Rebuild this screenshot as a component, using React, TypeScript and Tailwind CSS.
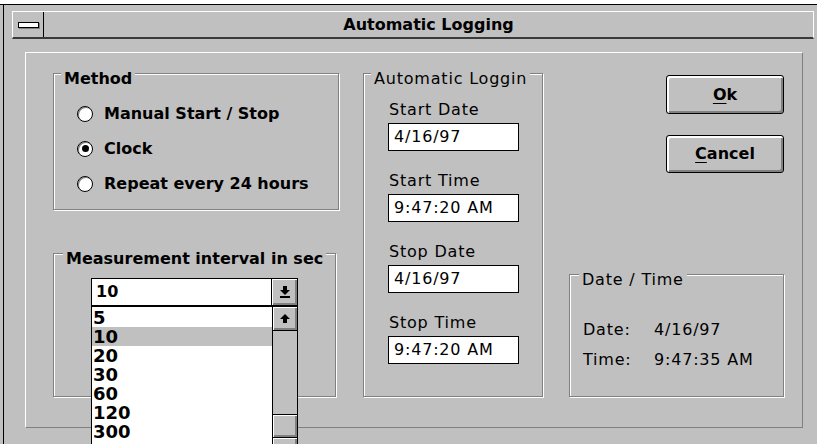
import React from "react";

type GroupProps = {
  title: string;
  bold?: boolean;
  legendClass: string;
  className: string;
  children?: React.ReactNode;
};

// Etched group frame with its caption sitting on the top line
function Group({ title, bold, legendClass, className, children }: GroupProps) {
  return (
    <div className={`relative border border-[#808080] shadow-[inset_1px_1px_0_#fff,1px_1px_0_#fff] ${className}`}>
      <span
        className={`absolute -top-[4px] whitespace-nowrap bg-[#c0c0c0] px-[3px] leading-[18px] ${
          bold ? "text-[16px] font-bold" : "text-[16px] tracking-[0.8px]"
        } ${legendClass}`}
      >
        {title}
      </span>
      {children}
    </div>
  );
}

function Radio({ label, checked }: { label: string; checked?: boolean }) {
  return (
    <div className="flex h-[21px] items-center gap-[11px]">
      <span className="flex h-[16px] w-[16px] shrink-0 items-center justify-center rounded-full border border-black bg-white shadow-[inset_1px_1px_0_#808080]">
        {checked && <span className="h-[7px] w-[7px] rounded-full bg-black" />}
      </span>
      <span className="text-[16px] font-bold leading-[20px]">{label}</span>
    </div>
  );
}

function Field({ label, value }: { label: string; value: string }) {
  return (
    <div className="flex flex-col">
      <span className="mb-[3px] ml-[1px] leading-[20px] tracking-[0.8px]">{label}</span>
      <div className="h-[28px] w-[131px] border border-black bg-white pl-[5px] leading-[26px] tracking-[0.8px]">
        {value}
      </div>
    </div>
  );
}

function PushButton({ hot, rest, className }: { hot: string; rest: string; className: string }) {
  return (
    <button
      className={`flex w-[118px] items-center justify-center rounded-[3px] border border-black bg-[#c0c0c0] text-[16px] font-bold shadow-[inset_2px_2px_0_#fff,inset_-2px_-2px_0_#808080] ${className}`}
    >
      <span className="underline decoration-1 underline-offset-[3px]">{hot}</span>
      {rest}
    </button>
  );
}

function DownArrow() {
  return (
    <svg width="10" height="12" viewBox="0 0 10 12">
      <rect x="3" y="0" width="4" height="4" fill="#000" />
      <polygon points="0,4 10,4 5,9" fill="#000" />
      <rect x="0" y="10" width="10" height="2" fill="#000" />
    </svg>
  );
}

function UpArrow() {
  return (
    <svg width="10" height="9" viewBox="0 0 10 9">
      <polygon points="5,0 10,5 0,5" fill="#000" />
      <rect x="3" y="5" width="4" height="4" fill="#000" />
    </svg>
  );
}

const intervals = ["5", "10", "20", "30", "60", "120", "300"];

export default function App() {
  return (
    <div className="flex h-[444px] w-[817px] flex-col overflow-hidden bg-white font-['DejaVu_Sans',sans-serif] text-[16px] text-black">
      <div className="h-[4px] shrink-0 bg-white" />
      <div className="flex flex-1 border-t border-black bg-[#c0c0c0]">
        <div className="w-[3px] shrink-0" />
        {/* dialog window */}
        <div className="flex w-[830px] shrink-0 flex-col border-l border-black bg-[#c0c0c0] pl-[8px] pt-[6px]">
          {/* title bar */}
          <div className="flex h-[28px] w-[802px] shrink-0 border-l border-r border-t border-white border-b-2 border-b-[#3a3a3a]">
            <div className="flex w-[31px] shrink-0 items-center justify-center border-r border-black">
              <span className="h-[6px] w-[21px] border border-black bg-white shadow-[1px_1px_0_#808080]" />
            </div>
            <div className="flex flex-1 items-center justify-center text-[16px] font-bold">Automatic Logging</div>
          </div>

          {/* client area */}
          <div className="pl-[13px] pt-[13px]">
            <div className="flex h-[376px] w-[778px] border border-white border-b-[#808080] border-r-[#808080] pl-[27px] pt-[20px]">
              {/* left column */}
              <div className="flex w-[286px] shrink-0 flex-col">
                <Group title="Method" bold legendClass="left-[7px]" className="h-[137px] w-[286px]">
                  <div className="flex flex-col gap-[14px] pl-[23px] pt-[29px]">
                    <Radio label="Manual Start / Stop" />
                    <Radio label="Clock" checked />
                    <Radio label="Repeat every 24 hours" />
                  </div>
                </Group>

                <Group
                  title="Measurement interval in sec"
                  bold
                  legendClass="left-[9px]"
                  className="mt-[43px] h-[144px] w-[283px]"
                >
                  <div className="pl-[37px] pt-[24px]">
                    <div className="relative flex h-[28px] w-[207px]">
                      <div className="flex-1 border border-black bg-white pl-[4px] font-bold leading-[26px]">10</div>
                      <div className="flex w-[26px] items-center justify-center border border-l-0 border-black bg-[#c0c0c0] shadow-[inset_1px_1px_0_#fff,inset_-2px_-2px_0_#808080]">
                        <DownArrow />
                      </div>

                      {/* open drop-down list */}
                      <div className="absolute left-0 top-[28px] z-10 flex h-[154px] w-[207px] border border-black bg-white">
                        <div className="flex flex-1 flex-col pt-[1px]">
                          {intervals.map((v) => (
                            <div
                              key={v}
                              className={`h-[19px] overflow-hidden pl-[1px] text-[18px] font-bold leading-[19px] ${
                                v === "10" ? "bg-[#c0c0c0]" : ""
                              }`}
                            >
                              {v}
                            </div>
                          ))}
                        </div>
                        <div className="flex w-[25px] flex-col border-l border-black bg-[#c0c0c0]">
                          <div className="flex h-[24px] items-center justify-center border-b border-black shadow-[inset_1px_1px_0_#fff,inset_-2px_-2px_0_#808080]">
                            <UpArrow />
                          </div>
                          <div className="flex-1" />
                          <div className="h-[23px] border-t border-black shadow-[inset_1px_1px_0_#fff,inset_-2px_-2px_0_#808080]" />
                          <div className="h-[22px] border-t border-black shadow-[inset_1px_1px_0_#fff,inset_-2px_-2px_0_#808080]" />
                        </div>
                      </div>
                    </div>
                  </div>
                </Group>
              </div>

              {/* middle column */}
              <Group
                title="Automatic Loggin"
                legendClass="left-[7px]"
                className="ml-[24px] h-[324px] w-[180px] shrink-0"
              >
                <div className="flex flex-col gap-[20px] pl-[24px] pt-[26px]">
                  <Field label="Start Date" value="4/16/97" />
                  <Field label="Start Time" value="9:47:20 AM" />
                  <Field label="Stop Date" value="4/16/97" />
                  <Field label="Stop Time" value="9:47:20 AM" />
                </div>
              </Group>

              {/* right column */}
              <div className="ml-[26px] flex w-[215px] shrink-0 flex-col items-end">
                <PushButton hot="O" rest="k" className="mt-[2px] h-[39px]" />
                <PushButton hot="C" rest="ancel" className="mt-[21px] h-[38px]" />
                <Group
                  title="Date / Time"
                  legendClass="left-[9px]"
                  className="mt-[101px] h-[123px] w-[215px] self-stretch"
                >
                  <div className="flex flex-col gap-[10px] pl-[13px] pt-[45px] leading-[20px] tracking-[0.8px]">
                    <div className="flex">
                      <span className="w-[71px]">Date:</span>
                      <span>4/16/97</span>
                    </div>
                    <div className="flex">
                      <span className="w-[71px]">Time:</span>
                      <span>9:47:35 AM</span>
                    </div>
                  </div>
                </Group>
              </div>
            </div>
          </div>
        </div>
      </div>
    </div>
  );
}
